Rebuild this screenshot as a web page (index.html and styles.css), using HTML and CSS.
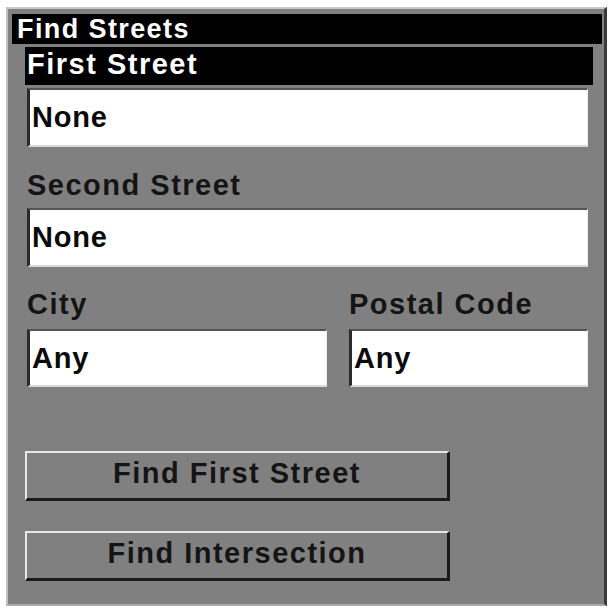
FILE: index.html
```html
<!DOCTYPE html>
<html lang="en">
<head>
    <meta charset="UTF-8">
    <meta name="viewport" content="width=device-width, initial-scale=1.0">
    <title>Find Streets</title>

    <link rel="stylesheet" href="styles.css">
</head>
<body>
    <div class="panel">
        <div class="title-bar">Find Streets</div>

        <div class="form">
            <div class="label label-active">First Street</div>
            <div class="field">None</div>

            <div class="label label-gap">Second Street</div>
            <div class="field">None</div>

            <div class="row">
                <div>
                    <div class="label label-small">City</div>
                    <div class="field field-short">Any</div>
                </div>
                <div>
                    <div class="label label-small">Postal Code</div>
                    <div class="field field-short">Any</div>
                </div>
            </div>

            <div class="buttons">
                <button class="btn">Find First Street</button>
                <button class="btn">Find Intersection</button>
            </div>
        </div>
    </div>
</body>
</html>
```

FILE: styles.css
```css
body {
    margin: 0;
    background: #ffffff;
    font-family: "Liberation Sans", Arial, sans-serif;
    font-weight: bold;
}
.panel {
    box-sizing: border-box;
    margin: 7px 0 0 6px;
    width: 601px;
    height: 599px;
    background: #808080;
    border-top: 2px solid #c8c8c8;
    border-left: 2px solid #c0c0c0;
    border-right: 3px solid #3a3a3a;
    border-bottom: 2px solid #a8a8a8;
}
.title-bar {
    margin: 5px 2px 0 4px;
    height: 30px;
    line-height: 30px;
    padding-left: 5px;
    background: #000000;
    color: #ffffff;
    font-size: 27px;
    letter-spacing: 1.4px;
}
.form {
    padding: 3px 16px 0 19px;
}
.label {
    height: 38px;
    line-height: 30px;
    color: #141414;
    font-size: 29px;
    letter-spacing: 1.5px;
}
.label-active {
    margin: 0 -5px 3px -2px;
    padding-left: 2px;
    line-height: 34px;
    background: #000000;
    color: #ffffff;
}
.label-gap {
    margin-top: 23px;
}
.label-small {
    margin-top: 24px;
    line-height: 26px;
}
.field {
    box-sizing: border-box;
    height: 59px;
    line-height: 55px;
    padding-left: 2px;
    background: #ffffff;
    color: #0a0a0a;
    font-size: 29px;
    letter-spacing: 0.8px;
    border-left: 3px solid #2a2a2a;
    border-top: 2px solid #555555;
    border-right: 1px solid #eeeeee;
    border-bottom: 2px solid #d8d8d8;
}
.field-short {
    height: 58px;
    line-height: 54px;
}
.row {
    display: grid;
    grid-template-columns: 300px 1fr;
    column-gap: 22px;
}
.buttons {
    display: flex;
    flex-direction: column;
    gap: 30px;
    margin: 64px 0 0 -2px;
}
.btn {
    box-sizing: border-box;
    width: 425px;
    height: 50px;
    padding: 0 0 5px 0;
    background: #808080;
    color: #141414;
    font-family: "Liberation Sans", Arial, sans-serif;
    font-weight: bold;
    font-size: 29px;
    letter-spacing: 1.5px;
    border-top: 2px solid #e8e8e8;
    border-left: 2px solid #e8e8e8;
    border-right: 3px solid #1a1a1a;
    border-bottom: 3px solid #1a1a1a;
    cursor: pointer;
}
```
